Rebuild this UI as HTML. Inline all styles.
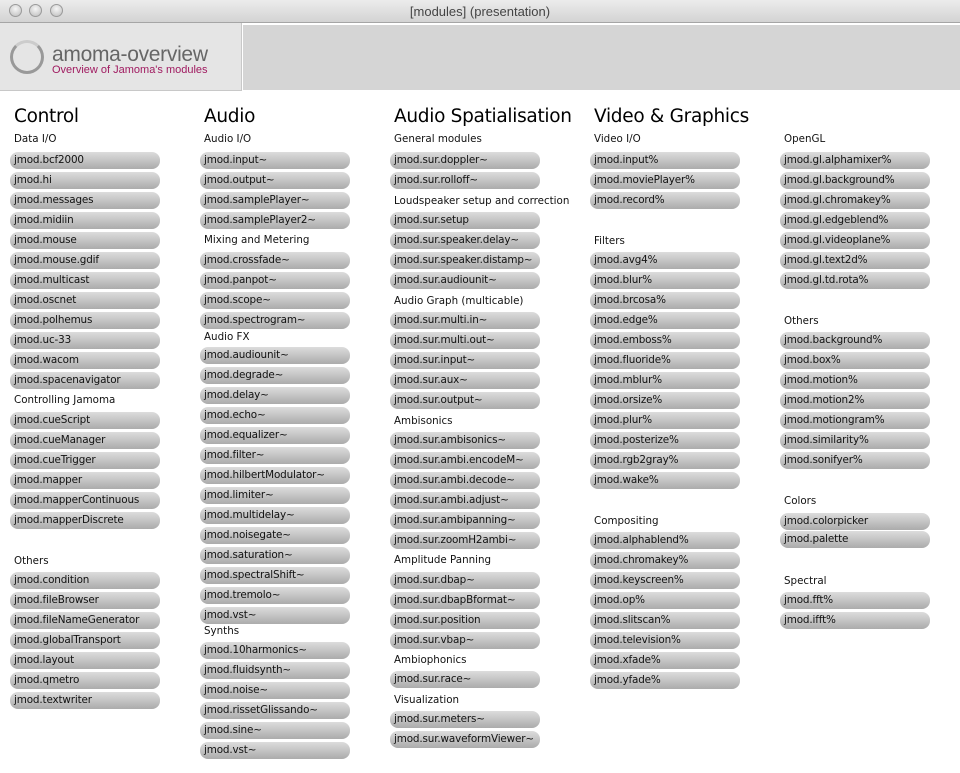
<!DOCTYPE html>
<html><head><meta charset="utf-8"><style>
body{margin:0;width:960px;height:773px;background:#fff;position:relative;overflow:hidden;font-family:"DejaVu Sans","Liberation Sans",sans-serif;}
#tb{position:absolute;left:0;top:0;width:960px;height:22px;background:linear-gradient(#ececec,#d3d3d3);border-bottom:1px solid #a5a5a5;}
#tb .t{position:absolute;left:0;width:960px;top:4px;text-align:center;font:13px "Liberation Sans",sans-serif;color:#444;}
.dot{position:absolute;top:4px;width:13px;height:13px;border-radius:50%;background:radial-gradient(circle at 50% 35%,#f6f6f6,#bcbcbc);border:1px solid #9a9a9a;box-sizing:border-box;}
#hl{position:absolute;left:0;top:23px;width:241px;height:67px;background:#e5e5e5;border-bottom:1px solid #c8c8c8;border-right:1px solid #c8c8c8;}
#hr{position:absolute;left:243px;top:25px;width:717px;height:65px;background:#d5d5d5;}
#circ{position:absolute;left:10px;top:40px;width:34px;height:34px;border-radius:50%;border:3px solid #999;border-top-color:#ccc;box-sizing:border-box;}
#ttl{position:absolute;left:52px;top:43px;font:21px "Liberation Sans",sans-serif;color:#666;letter-spacing:-0.3px}
#sub{position:absolute;left:52px;top:64px;font:11px "Liberation Sans",sans-serif;color:#a01a60;}
.h{position:absolute;font:18.5px "DejaVu Sans",sans-serif;color:#000;letter-spacing:-0.3px}
.l{position:absolute;font:10.3px "DejaVu Sans",sans-serif;color:#111;line-height:13px}
.b{position:absolute;width:150px;height:17px;border-radius:8px;background:linear-gradient(#dcdcdc,#c4c4c4 50%,#ababab);font:10.4px "DejaVu Sans",sans-serif;color:#111;line-height:17px;padding-left:4px;box-sizing:border-box;letter-spacing:-0.15px}
</style></head><body>
<div id="tb"><div class="dot" style="left:9px"></div><div class="dot" style="left:29px"></div><div class="dot" style="left:50px"></div><div class="t">[modules] (presentation)</div></div>
<div id="hl"></div><div id="hr"></div>
<div id="circ"></div><div id="ttl">amoma-overview</div><div id="sub">Overview of Jamoma's modules</div>
<div id="c"></div>
<script>
var H=[[14,"Control"],[204,"Audio"],[394,"Audio Spatialisation"],[594,"Video &amp; Graphics"]];
var s="";H.forEach(function(h){s+='<div class="h" style="left:'+h[0]+'px;top:106px">'+h[1]+'</div>';});
var cols=[[10,[
["L",139,"Data I/O"],["B",160,"bcf2000 hi messages midiin mouse mouse.gdif multicast oscnet polhemus uc-33 wacom spacenavigator"],
["L",400,"Controlling Jamoma"],["B",420,"cueScript cueManager cueTrigger mapper mapperContinuous mapperDiscrete"],
["L",561,"Others"],["B",580,"condition fileBrowser fileNameGenerator globalTransport layout qmetro textwriter"]]],
[200,[["L",139,"Audio I/O"],["B",160,"input~ output~ samplePlayer~ samplePlayer2~"],["L",240,"Mixing and Metering"],["B",260,"crossfade~ panpot~ scope~ spectrogram~"],
["L",337,"Audio FX"],["B",355,"audiounit~ degrade~ delay~ echo~ equalizer~ filter~ hilbertModulator~ limiter~ multidelay~ noisegate~ saturation~ spectralShift~ tremolo~ vst~"],
["L",631,"Synths"],["B",650,"10harmonics~ fluidsynth~ noise~ rissetGlissando~ sine~ vst~"]]],
[390,[["L",139,"General modules"],["B",160,"sur.doppler~ sur.rolloff~"],["L",201,"Loudspeaker setup and correction"],["B",220,"sur.setup sur.speaker.delay~ sur.speaker.distamp~ sur.audiounit~"],
["L",301,"Audio Graph (multicable)"],["B",320,"sur.multi.in~ sur.multi.out~ sur.input~ sur.aux~ sur.output~"],["L",421,"Ambisonics"],["B",440,"sur.ambisonics~ sur.ambi.encodeM~ sur.ambi.decode~ sur.ambi.adjust~ sur.ambipanning~ sur.zoomH2ambi~"],
["L",560,"Amplitude Panning"],["B",580,"sur.dbap~ sur.dbapBformat~ sur.position sur.vbap~"],["L",660,"Ambiophonics"],["B",679,"sur.race~"],["L",700,"Visualization"],["B",719,"sur.meters~ sur.waveformViewer~"]]],
[590,[["L",139,"Video I/O"],["B",160,"input% moviePlayer% record%"],["L",241,"Filters"],["B",260,"avg4% blur% brcosa% edge% emboss% fluoride% mblur% orsize% plur% posterize% rgb2gray% wake%"],
["L",521,"Compositing"],["B",540,"alphablend% chromakey% keyscreen% op% slitscan% television% xfade% yfade%"]]],
[780,[["L",139,"OpenGL"],["B",160,"gl.alphamixer% gl.background% gl.chromakey% gl.edgeblend% gl.videoplane% gl.text2d% gl.td.rota%"],
["L",321,"Others"],["B",340,"background% box% motion% motion2% motiongram% similarity% sonifyer%"],["L",501,"Colors"],["B",521,"colorpicker"],["B",539,"palette"],["L",581,"Spectral"],["B",600,"fft% ifft%"]]]];
cols.forEach(function(c){var x=c[0];c[1].forEach(function(g){
 if(g[0]=="L"){s+='<div class="l" style="left:'+(x+4)+'px;top:'+(g[1]-6)+'px">'+g[2]+'</div>';}
 else{g[2].split(" ").forEach(function(n,i){s+='<div class="b" style="left:'+x+'px;top:'+(g[1]-8+i*20)+'px">jmod.'+n+'</div>';});}
});});
document.getElementById("c").innerHTML=s;
</script>
</body></html>
